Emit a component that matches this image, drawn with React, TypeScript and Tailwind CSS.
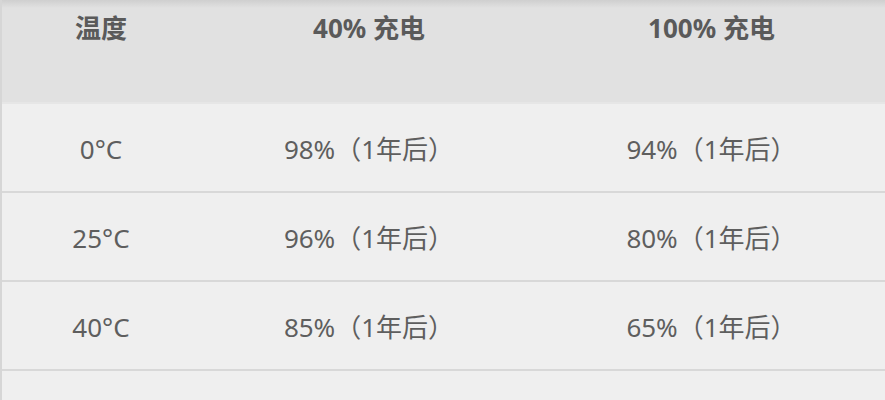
import React from "react";

const rows = [
  ["0°C", "98%（1年后）", "94%（1年后）"],
  ["25°C", "96%（1年后）", "80%（1年后）"],
  ["40°C", "85%（1年后）", "65%（1年后）"],
];

export default function App() {
  return (
    <div
      className="w-[885px] h-[400px] overflow-hidden bg-[#efefef] border-l-2 border-[#d6d6d6]"
      style={{ fontFamily: '"Noto Sans", "Noto Sans CJK SC", sans-serif' }}
    >
      <div className="relative h-[104px] bg-[#e1e1e1] grid grid-cols-[198px_338px_1fr] text-[26px] font-bold text-[#5a5a5a]">
        <div className="absolute inset-x-0 top-0 h-[8px] bg-gradient-to-b from-[#cfcfcf] to-[#e1e1e1]" />
        <div className="absolute inset-x-0 bottom-0 h-[2px] bg-[#e6e6e6]" />
        <div className="relative pt-[10px] leading-[36px] text-center">温度</div>
        <div className="relative pt-[10px] leading-[36px] text-center">40% 充电</div>
        <div className="relative pt-[10px] leading-[36px] text-center">100% 充电</div>
      </div>
      {rows.map((r) => (
        <div
          key={r[0]}
          className="h-[89px] pt-[3px] border-b-2 border-[#d8d8d8] grid grid-cols-[198px_338px_1fr] items-center text-[26px] text-[#5e5e5e]"
        >
          <div className="text-center">{r[0]}</div>
          <div className="text-center">{r[1]}</div>
          <div className="text-center">{r[2]}</div>
        </div>
      ))}
      <div className="h-[40px]" />
    </div>
  );
}
